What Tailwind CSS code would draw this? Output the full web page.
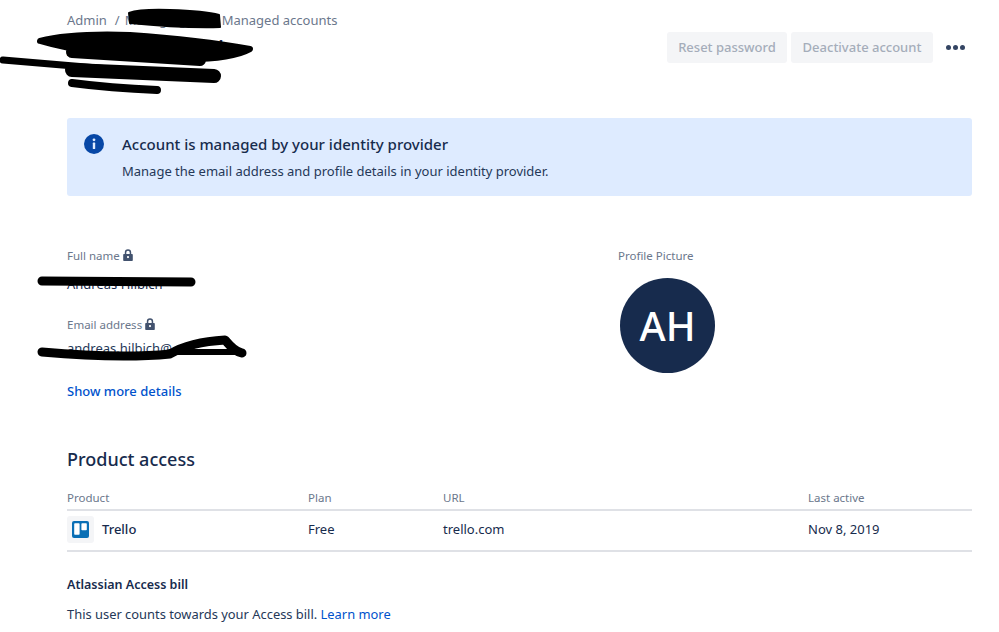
<!DOCTYPE html>
<html lang="en">
  <head>
    <meta charset="UTF-8" />
    <title>Managed accounts</title>
    <script src="https://cdn.jsdelivr.net/npm/@tailwindcss/browser@4"></script>
  </head>
  <body class="bg-white">
    <div class="relative h-[632px] w-[999px] overflow-hidden font-['Noto_Sans','Open_Sans',sans-serif] text-[#172b4d]">
      <main class="ml-[67px] w-[905px] pt-[12px]">
        <nav class="flex h-[18px] items-center text-[13px] text-[#6b778c]">
          <span>Admin</span>
          <span class="ml-[8px]">/</span>
          <span class="ml-[5px] w-[97px]">Managing</span>
          <span>Managed accounts</span>
        </nav>

        <div class="mt-[2px] flex h-[31px] items-center justify-between">
          <div class="text-[22px] font-medium text-[#172b4d]">Andreas Hilbich</div>
          <div class="flex items-center">
            <button class="h-[31px] w-[120px] rounded-[3px] bg-[#f4f5f7] text-[13px] font-medium text-[#a5adba]">Reset password</button>
            <button class="ml-[4px] h-[31px] w-[142px] rounded-[3px] bg-[#f4f5f7] text-[13px] font-medium text-[#a5adba]">Deactivate account</button>
            <span class="ml-[13px] mr-[7px] flex gap-[2px]">
              <i class="size-[5px] rounded-full bg-[#344563]"></i>
              <i class="size-[5px] rounded-full bg-[#344563]"></i>
              <i class="size-[5px] rounded-full bg-[#344563]"></i>
            </span>
          </div>
        </div>

        <div class="mt-[55px] flex h-[78px] rounded-[3px] bg-[#deebff] pl-[17px] pt-[15px]">
          <svg class="mt-[1px] size-[20px]" viewBox="0 0 20 20">
            <circle cx="10" cy="10" r="10" fill="#0747a6" />
            <circle cx="10" cy="5.8" r="1.4" fill="#deebff" />
            <rect x="8.8" y="8.6" width="2.4" height="6.4" rx="0.6" fill="#deebff" />
          </svg>
          <div class="ml-[18px]">
            <h2 class="text-[15px] leading-[22px] font-medium text-[#172b4d]">Account is managed by your identity provider</h2>
            <p class="mt-[7px] text-[13px] leading-[18px] text-[#253858]">Manage the email address and profile details in your identity provider.</p>
          </div>
        </div>

        <section class="mt-[52px] flex h-[171px]">
          <div class="w-[551px]">
            <div class="flex h-[16px] items-center text-[11.5px] text-[#6b778c]">
              Full name
              <svg class="mb-[2px] ml-[2px] size-[12px]" viewBox="0 0 12 12"><path fill="#42526e" fill-rule="evenodd" d="M2 5h.8V3.400a3.200 3.200 0 0 1 6.400 0V5h.8a.8.8 0 0 1 .8.8v5.400a.8.8 0 0 1-.8.8H2a.8.8 0 0 1-.8-.8V5.800a.8.8 0 0 1 .8-.8zm2.300 0h3.400V3.400a1.700 1.700 0 0 0-3.400 0V5zM6 7a1.100 1.100 0 1 0 0 2.200A1.100 1.100 0 0 0 6 7z" /></svg>
            </div>
            <div class="mt-[10px] h-[20px] text-[13px] leading-[20px]">Andreas Hilbich</div>
            <div class="mt-[23px] flex h-[16px] items-center text-[11.5px] text-[#6b778c]">
              Email address
              <svg class="mb-[2px] ml-[2px] size-[12px]" viewBox="0 0 12 12"><path fill="#42526e" fill-rule="evenodd" d="M2 5h.8V3.400a3.200 3.200 0 0 1 6.400 0V5h.8a.8.8 0 0 1 .8.8v5.400a.8.8 0 0 1-.8.8H2a.8.8 0 0 1-.8-.8V5.800a.8.8 0 0 1 .8-.8zm2.300 0h3.400V3.400a1.700 1.700 0 0 0-3.400 0V5zM6 7a1.100 1.100 0 1 0 0 2.200A1.100 1.100 0 0 0 6 7z" /></svg>
            </div>
            <div class="mt-[5px] h-[20px] text-[13px] leading-[20px] text-[#253858]">andreas.hilbich@</div>
            <a class="mt-[23px] block text-[13px] leading-[20px] font-medium text-[#0052cc]">Show more details</a>
          </div>
          <div>
            <div class="flex h-[16px] items-center text-[11.5px] text-[#6b778c]">Profile Picture</div>
            <div class="mt-[14px] ml-[2px] flex size-[95px] items-center justify-center rounded-full bg-[#172b4d] text-[40px] font-medium text-white">AH</div>
          </div>
        </section>

        <h2 class="mt-[27px] text-[18px] leading-[26px] font-medium text-[#172b4d]">Product access</h2>

        <div class="mt-[17px] grid h-[22px] grid-cols-[241px_135px_365px_1fr] items-center border-b-2 border-[#dfe1e6] pb-[2px] text-[11.5px] text-[#6b778c]">
          <span>Product</span><span>Plan</span><span>URL</span><span>Last active</span>
        </div>
        <div class="grid h-[41px] grid-cols-[241px_135px_365px_1fr] items-center border-b-2 border-[#dfe1e6] pb-[2px] text-[13px]">
          <span class="flex items-center font-medium">
            <span class="flex size-[27px] items-center justify-center rounded-[3px] bg-[#f4f5f7]">
              <svg class="mr-[1px] size-[17px]" viewBox="0 0 17 17">
                <rect width="17" height="17" rx="2" fill="#0a6fb5" />
                <rect x="2.200" y="2.200" width="5.400" height="11.600" rx="0.800" fill="#fff" />
                <rect x="9.400" y="2.200" width="5.400" height="7" rx="0.800" fill="#fff" />
              </svg>
            </span>
            <span class="ml-[8px]">Trello</span>
          </span>
          <span>Free</span><span>trello.com</span><span>Nov 8, 2019</span>
        </div>

        <h3 class="mt-[23px] text-[12.5px] leading-[20px] font-semibold text-[#172b4d]">Atlassian Access bill</h3>
        <p class="mt-[9px] text-[12.9px] leading-[20px] text-[#253858]">This user counts towards your Access bill. <a class="text-[#0052cc]">Learn more</a></p>
      </main>

      <!-- hand-drawn redaction strokes on top of the screenshot -->
      <svg class="absolute top-0 left-0" width="999" height="632" viewBox="0 0 999 632" fill="none" stroke="#000" stroke-linecap="round" stroke-linejoin="round">
        <path fill="#000" stroke-width="2" d="M129 13 Q140 9 170 10 Q205 11 219 15 L220 27 Q180 28 130 23 Z" />
        <path fill="#000" stroke-width="6" d="M40 41 Q70 33 130 35 Q200 40 250 49 Q230 60 180 59 Q90 56 40 41 Z" />
        <path stroke-width="12" d="M72 52 L200 60" />
        <path stroke-width="7" d="M3 60 Q100 68 216 78" />
        <path stroke-width="14" d="M72 70 L214 76" />
        <path stroke-width="8" d="M72 83 Q110 88 157 90" />
        <path stroke-width="9" d="M42 281 L191 282" />
        <path stroke-width="9" d="M42 352 Q120 359 170 354 Q190 342 225 340 Q235 352 242 353" />
        <path stroke-width="6" d="M170 352 L240 352" />
      </svg>
    </div>
  </body>
</html>
